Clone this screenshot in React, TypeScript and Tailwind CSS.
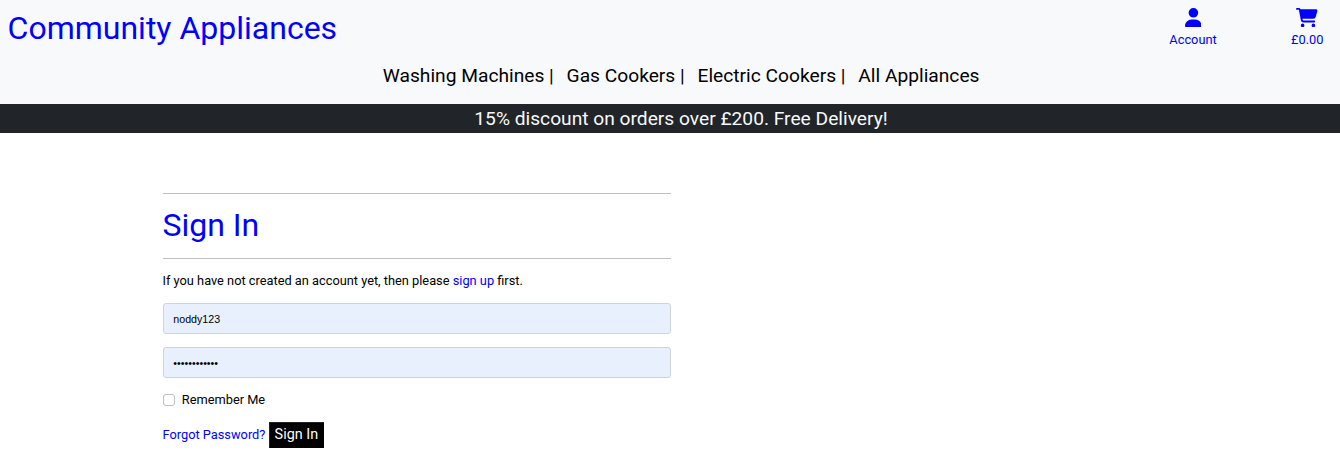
import React from "react";
import { FaUser, FaCartShopping } from "react-icons/fa6";

export default function App() {
  return (
    <div className="min-h-[475px] overflow-hidden bg-white font-['Roboto',sans-serif] text-[12.8px] leading-[19.2px] text-black">
      <header className="h-[104px] bg-[#f8f9fa]">
        <div className="flex h-[56px] justify-between text-[#0000ff]">
          <a className="pt-[9px] pl-[7.6px] text-[32px] leading-[38px]">Community Appliances</a>
          <div className="flex pt-2 pr-[16.6px] text-center">
            <a className="flex flex-col items-center">
              <FaUser className="h-[19.2px] w-[16.8px]" />
              <span className="mt-[2.8px]">Account</span>
            </a>
            <a className="ml-[74.3px] flex flex-col items-center">
              <FaCartShopping className="h-[19.2px] w-[21.6px]" />
              <span className="mt-[2.8px]">£0.00</span>
            </a>
          </div>
        </div>
        <nav className="flex gap-[12.8px] pt-[5px] pl-[382.8px] text-[19.2px] leading-[29px] whitespace-nowrap">
          <a>Washing Machines |</a>
          <a>Gas Cookers |</a>
          <a>Electric Cookers |</a>
          <a>All Appliances</a>
        </nav>
      </header>
      <div className="h-[29px] bg-[#212529] pl-[22px] text-center text-[19.2px] leading-[29px] text-[#f8f9fa]">
        15% discount on orders over £200. Free Delivery!
      </div>
      <main className="mt-[60px] ml-[162.5px] w-[508px]">
        <hr className="border-[#bfbfbf]" />
        <h1 className="mt-[12px] text-[32px] leading-[38px] text-[#0000ff]">Sign In</h1>
        <hr className="mt-[14px] border-[#bfbfbf]" />
        <p className="mt-[12px]">
          If you have not created an account yet, then please <a className="text-[#0000ff]">sign up</a> first.
        </p>
        <form>
          <input readOnly value="noddy123" className="mt-[13px] block h-[31px] w-full rounded-[3px] border border-[#ced4da] bg-[#e8f0fe] px-[9.8px] font-['Liberation_Sans',sans-serif] text-[10.6667px] outline-none" />
          <input readOnly type="password" value="abcdefghijkl" className="mt-[13px] block h-[31px] w-full rounded-[3px] border border-[#ced4da] bg-[#e8f0fe] px-[9.8px] font-['Liberation_Sans',sans-serif] text-[10.6667px] outline-none" />
          <label className="mt-[12px] flex h-[19px] items-center gap-[7.3px]">
            <input type="checkbox" className="size-[12px] appearance-none rounded-[3px] border border-[#bfbfbf] bg-white" />
            Remember Me
          </label>
          <div className="mt-[13px] flex items-start gap-[3.5px]">
            <a className="pt-[3px] text-[#0000ff]">Forgot Password?</a>
            <button type="button" className="h-[26px] w-[55px] border border-black border-t-[#212529] border-l-[#212529] bg-black text-[14.4px] leading-[22px] text-white">Sign In</button>
          </div>
        </form>
      </main>
    </div>
  );
}
